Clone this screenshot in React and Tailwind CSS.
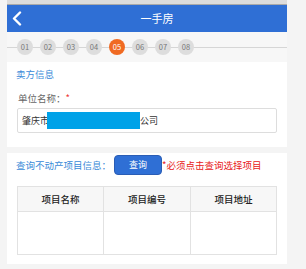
const steps = ["01", "02", "03", "04", "05", "06", "07", "08"];

function App() {
  const font = { fontFamily: '"Noto Sans CJK SC", "Noto Sans", sans-serif' };
  return (
    <div className="min-h-screen w-[306px] bg-[#f4f4f4] pl-[7px] pr-[19px]" style={font}>
      <div className="h-[4px] bg-[#dcdcdc]" />
      <div className="relative flex h-[28px] items-center border-t border-[#a9a9a9] bg-[#2f6fd5]">
        <svg className="absolute left-[5px] top-[6px]" width="10" height="15" viewBox="0 0 10 15">
          <path d="M8 1.5 L2 7.5 L8 13.5" fill="none" stroke="#fff" strokeWidth="2.4" strokeLinecap="round" strokeLinejoin="round" />
        </svg>
        <div className="w-full pl-[20px] text-center text-[11px] text-white">一手房</div>
      </div>

      <div className="relative flex h-[30px] items-center bg-[#f7f7f7] pl-[10px]">
        <div className="absolute left-0 right-0 top-[15px] h-px bg-[#d6d6d6]" />
        <div className="relative flex gap-[7px]">
          {steps.map((s) => (
            <div
              key={s}
              className={
                s === "05"
                  ? "flex h-[16px] w-[16px] items-center justify-center rounded-full bg-[#f06a22] text-[7.5px] text-white"
                  : "flex h-[16px] w-[16px] items-center justify-center rounded-full bg-[#dddddd] text-[7.5px] text-[#777]"
              }
            >
              {s}
            </div>
          ))}
        </div>
      </div>

      <div className="bg-white pt-[6px] pb-[14px]">
        <div className="pl-[9px] text-[9.5px] leading-[12px] text-[#3a8ad8]">卖方信息</div>
        <div className="mt-[12px] pl-[11px] text-[9.5px] leading-[12px] text-[#666]">
          单位名称：<span className="text-[#e33]">*</span>
        </div>
        <div className="mx-[10px] mt-[4px] flex h-[25px] items-center rounded-[2px] border border-[#dddddd] pl-[4px] text-[9px] text-[#333]">
          <span>肇庆市</span>
          <span className="-ml-[2px] h-[17px] w-[93px] bg-[#00a2e8]" />
          <span>公司</span>
        </div>
      </div>

      <div className="mt-[6px] bg-white pt-[2px] pb-[9px]">
        <div className="flex items-center pl-[9px]">
          <span className="text-[9.5px] text-[#3a8ad8]">查询不动产项目信息：</span>
          <button className="ml-[3px] flex h-[20px] w-[48px] items-center justify-center rounded-[4px] border border-[#2a5db5] bg-[#2f6fd5] text-[9px] text-white">
            查询
          </button>
          <span className="text-[9.5px] text-[#e82020]">*必须点击查询选择项目</span>
        </div>
        <table className="mx-[10px] mt-[11px] w-[260px] border-collapse text-[9.5px] text-[#222]">
          <thead>
            <tr className="h-[25px] bg-[#f7f7f7]">
              <th className="w-[86px] border border-[#e2e2e2] font-medium">项目名称</th>
              <th className="w-[87px] border border-[#e2e2e2] font-medium">项目编号</th>
              <th className="border border-[#e2e2e2] font-medium">项目地址</th>
            </tr>
          </thead>
          <tbody>
            <tr className="h-[43px]">
              <td className="border border-[#e2e2e2]" />
              <td className="border border-[#e2e2e2]" />
              <td className="border border-[#e2e2e2]" />
            </tr>
          </tbody>
        </table>
      </div>
    </div>
  );
}

export default App;
